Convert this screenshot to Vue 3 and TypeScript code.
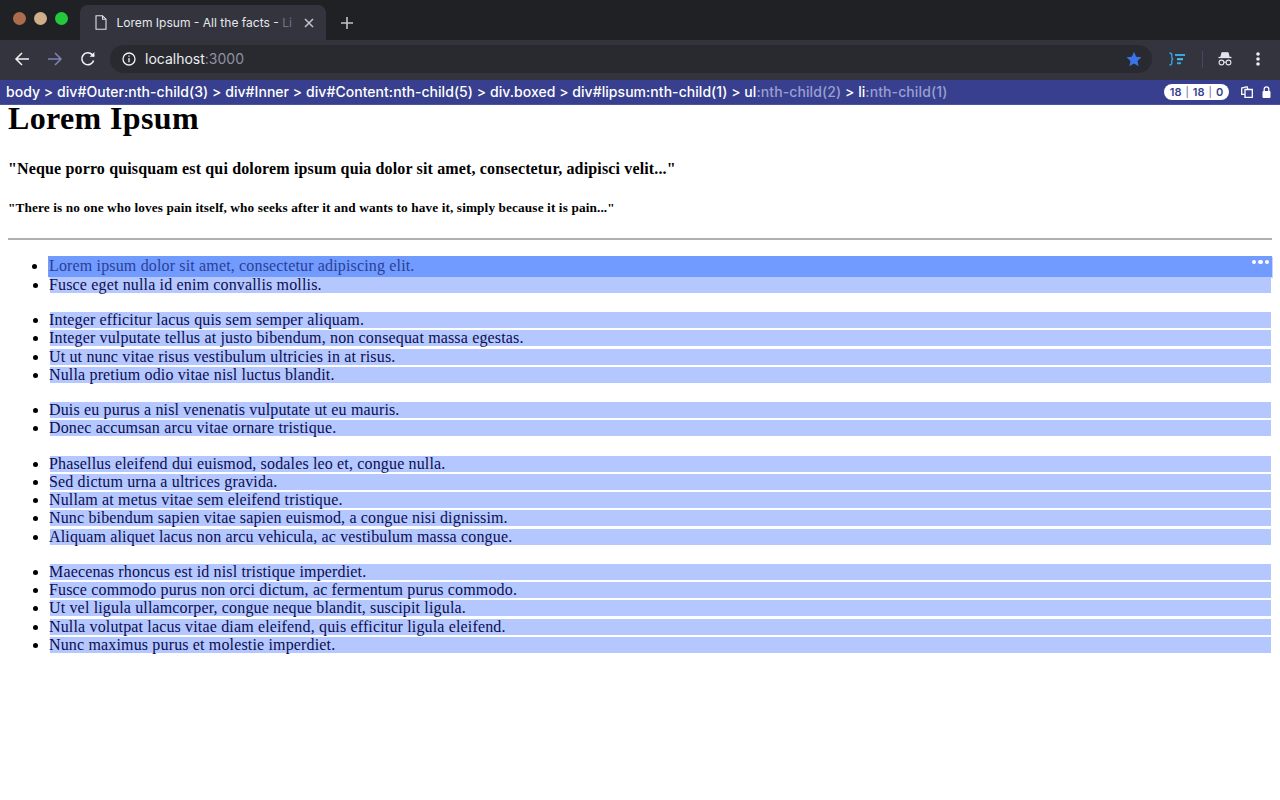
<script setup lang="ts">
const groups: string[][] = [
  ['Lorem ipsum dolor sit amet, consectetur adipiscing elit.', 'Fusce eget nulla id enim convallis mollis.'],
  ['Integer efficitur lacus quis sem semper aliquam.', 'Integer vulputate tellus at justo bibendum, non consequat massa egestas.', 'Ut ut nunc vitae risus vestibulum ultricies in at risus.', 'Nulla pretium odio vitae nisl luctus blandit.'],
  ['Duis eu purus a nisl venenatis vulputate ut eu mauris.', 'Donec accumsan arcu vitae ornare tristique.'],
  ['Phasellus eleifend dui euismod, sodales leo et, congue nulla.', 'Sed dictum urna a ultrices gravida.', 'Nullam at metus vitae sem eleifend tristique.', 'Nunc bibendum sapien vitae sapien euismod, a congue nisi dignissim.', 'Aliquam aliquet lacus non arcu vehicula, ac vestibulum massa congue.'],
  ['Maecenas rhoncus est id nisl tristique imperdiet.', 'Fusce commodo purus non orci dictum, ac fermentum purus commodo.', 'Ut vel ligula ullamcorper, congue neque blandit, suscipit ligula.', 'Nulla volutpat lacus vitae diam eleifend, quis efficitur ligula eleifend.', 'Nunc maximus purus et molestie imperdiet.'],
]
</script>

<template>
  <div class="page">
    <div class="tabstrip">
      <div class="lights">
        <span class="light red"></span>
        <span class="light yellow"></span>
        <span class="light green"></span>
      </div>
      <div class="tab">
        <svg class="doc" width="12" height="15" viewBox="0 0 12 15" fill="none" stroke="#dfe1e5" stroke-width="1.1"><path d="M1 .8h6.500l3.500 3.400v10H1z" /><path d="M7.500 .8v3.400h3.500" /></svg>
        <span class="tab-title">Lorem Ipsum - All the facts - <span class="tab-fade">Li</span></span>
        <svg class="tab-x" width="10" height="10" viewBox="0 0 10 10" stroke="#c4c7d2" stroke-width="1.5"><path d="M1 1l8 8M9 1l-8 8" /></svg>
      </div>
      <svg class="plus" width="14" height="14" viewBox="0 0 14 14" stroke="#bfc2cc" stroke-width="1.6"><path d="M7 1v12M1 7h12" /></svg>
    </div>
    <div class="toolbar">
      <svg class="nav" width="16" height="16" viewBox="0 0 16 16" fill="none" stroke="#f1f3f4" stroke-width="1.5"><path d="M15 8H2M8 2L2 8l6 6" /></svg>
      <svg class="nav" width="16" height="16" viewBox="0 0 16 16" fill="none" stroke="#7f83b5" stroke-width="1.5"><path d="M1 8h13M8 2l6 6-6 6" /></svg>
      <svg class="nav" width="16" height="16" viewBox="0 0 16 16" fill="none" stroke="#f1f3f4" stroke-width="1.6"><path d="M13.600 9.500A6 6 0 1 1 12.200 3.600L14 5.400" /><path d="M14.400 1v4.800H9.600" fill="#f1f3f4" stroke="none" /></svg>
      <div class="omnibox">
        <svg width="14" height="14" viewBox="0 0 14 14" fill="none" stroke="#f1f3f4" stroke-width="1.300"><circle cx="7" cy="7" r="6" /><path d="M7 6v4.200M7 3.400v1.400" /></svg>
        <span class="url">localhost<span class="port">:3000</span></span>
        <svg class="star" width="16" height="16" viewBox="0 0 16 16" fill="#3b73e8"><path d="M8 .8l2.200 4.900 5.300.6-4 3.600 1.100 5.300L8 12.500l-4.600 2.700 1.100-5.300-4-3.600 5.300-.6z" /></svg>
      </div>
      <svg class="ext" width="16" height="14" viewBox="0 0 16 14" fill="none" stroke="#35a7e8"><path d="M.5 1C2.500 1 2.800 2 2.800 3.200v2C2.800 6.300 3.400 7 4.200 7 3.400 7 2.800 7.700 2.800 8.800v2C2.800 12 2.500 13 .5 13" stroke-width="1.300" /><path d="M6 3h10" stroke-width="2" /><path d="M8 7.200h6" stroke-width="2" stroke="#4fc3f0" /><path d="M8 11.200h4" stroke-width="2" /></svg>
      <span class="sep"></span>
      <svg class="spy" width="14" height="14" viewBox="0 0 14 14" fill="none" stroke="#e3e5ea" stroke-width="1.100"><path d="M4 .8h6l1 3.600H3z" fill="#e3e5ea" /><path d="M.5 5.500h13" stroke-width="1.300" /><circle cx="3.500" cy="10.500" r="2.400" /><circle cx="10.500" cy="10.500" r="2.400" /><path d="M5.900 10.200h2.200" /></svg>
      <svg class="menu" width="4" height="14" viewBox="0 0 4 14" fill="#eceef2"><circle cx="2" cy="2" r="1.800" /><circle cx="2" cy="7" r="1.800" /><circle cx="2" cy="12" r="1.800" /></svg>
    </div>
    <div class="selectorbar">
      <div class="crumbs">body &gt; div#Outer:nth-child(3) &gt; div#Inner &gt; div#Content:nth-child(5) &gt; div.boxed &gt; div#lipsum:nth-child(1) &gt; ul<span class="dim">:nth-child(2)</span> &gt; li<span class="dim">:nth-child(1)</span></div>
      <div class="counts"><b>18</b><i>|</i><b>18</b><i>|</i><b>0</b></div>
      <svg class="copy" width="12" height="12" viewBox="0 0 12 12" fill="none" stroke="#fff" stroke-width="1.300"><path d="M3.800 8.400H.7V2L6 .7l1 2.700" /><path d="M4 3.500h7.300v7.900H4z" /></svg>
      <svg class="lock" width="9" height="12" viewBox="0 0 9 12"><path d="M2.200 6V3.200a2.300 2.300 0 0 1 4.600 0V6" fill="none" stroke="#fff" stroke-width="1.300" /><rect x=".5" y="5" width="8" height="7" rx="1" fill="#fff" /></svg>
    </div>
    <main class="content">
      <h1>Lorem Ipsum</h1>
      <h2>"Neque porro quisquam est qui dolorem ipsum quia dolor sit amet, consectetur, adipisci velit..."</h2>
      <h3>"There is no one who loves pain itself, who seeks after it and wants to have it, simply because it is pain..."</h3>
      <hr />
      <ul v-for="(g, gi) in groups" :key="gi">
        <li v-for="(t, ti) in g" :key="ti" :class="{ active: gi === 0 && ti === 0 }">
          {{ t }}
          <span v-if="gi === 0 && ti === 0" class="dots"><i></i><i></i><i></i></span>
        </li>
      </ul>
    </main>
  </div>
</template>

<style>
html, body { margin: 0; background: #fff; }
</style>

<style scoped>
.page { width: 1280px; height: 800px; overflow: hidden; background: #fff; display: flex; flex-direction: column; }
.tabstrip { height: 40px; background: #202124; display: flex; align-items: flex-end; flex: none; }
.lights { display: flex; gap: 8px; width: 80px; padding: 0 0 4px 13px; box-sizing: border-box; align-self: stretch; align-items: center; }
.light { width: 13px; height: 13px; border-radius: 50%; }
.red { background: #ac6c4e; }
.yellow { background: #cfb088; }
.green { background: #23c93b; }
.tab { width: 246px; height: 35px; background: #33343d; border-radius: 8px 8px 0 0; display: flex; align-items: center; box-sizing: border-box; padding: 0 12px 0 15px; font: 14px "Inter", "Liberation Sans", sans-serif; color: #e6e7ec; }
.doc { flex: none; margin-right: 9.500px; }
.tab-title { flex: 1; white-space: nowrap; font-size: 12.050px; }
.tab-fade { color: #70738f; }
.tab-x { flex: none; margin-left: 6px; }
.plus { margin: 0 0 10px 14px; }
.toolbar { height: 40px; background: #33343d; display: flex; align-items: center; padding: 0 0 2px 14px; flex: none; box-sizing: border-box; gap: 17px; }
.nav { flex: none; }
.omnibox { width: 1042px; height: 28px; margin-left: -3px; border-radius: 14px; background: #292a30; display: flex; align-items: center; padding: 0 10px 0 12px; box-sizing: border-box; gap: 9px; }
.url { flex: 1; margin-bottom: 2px; font: 14px "Inter", "Liberation Sans", sans-serif; color: #eceef2; }
.port { color: #8f92a3; }
.ext { flex: none; }
.sep { flex: none; width: 1px; height: 17px; background: #45466a; }
.spy { flex: none; margin-left: -2px; }
.menu { flex: none; margin-left: 7px; }
.selectorbar { height: 25px; background: #373f8e; border-bottom: 1px solid #4a55a8; box-sizing: border-box; display: flex; align-items: center; flex: none; padding: 0 9px 1px 6px; color: #fff; font: 500 14px "Inter", "Liberation Sans", sans-serif; }
.crumbs { flex: 1; white-space: nowrap; letter-spacing: .045px; }
.dim { color: #9a9fd0; letter-spacing: .1px; }
.counts { background: #fff; color: #373f8e; border-radius: 9px; height: 16px; width: 65px; display: flex; align-items: center; justify-content: center; gap: 4px; font-size: 11px; }
.counts b { font-weight: 600; }
.counts i { font-style: normal; font-weight: 400; font-size: 10px; color: #5a62a8; }
.copy { margin-left: 12px; }
.lock { margin-left: 9px; }
.content { font-family: "Liberation Serif", serif; color: #000; padding: 0 8px; flex: 1; }
h1 { font-size: 32px; line-height: 37px; margin: -5px 0 0; letter-spacing: .36px; }
h2 { font-size: 16px; line-height: 21px; margin: 21px 0 0; letter-spacing: .147px; }
h3 { font-size: 13.280px; line-height: 16px; margin: 21px 0 0; letter-spacing: .12px; }
hr { border: 0; height: 2px; background: #b0b0b0; margin: 22px 0 0; }
ul { margin: 19.200px 0; padding: 0 0 0 40px; font-size: 16px; letter-spacing: .155px; }
hr + ul { margin-top: 18.750px; }
li { height: 16px; line-height: 16px; margin: 0 1px 2.250px 1px; border-left: 1px solid transparent; background: #b4c8ff; background-clip: padding-box; color: #0d0d50; position: relative; text-indent: -1px; }
li::marker { color: #000; }
.active { background: #729bff; color: #2a3f96; height: 20.500px; line-height: 20.500px; margin: -2.750px 0 .500px; padding-left: 1px; border-left: 0; text-indent: 0; box-shadow: 1px 1px 0 #c4d6ff; }
.dots { position: absolute; right: 3px; top: 3.500px; display: flex; gap: 2px; }
.dots i { width: 4.500px; height: 4.500px; background: #fff; border-radius: 50%; }
</style>
